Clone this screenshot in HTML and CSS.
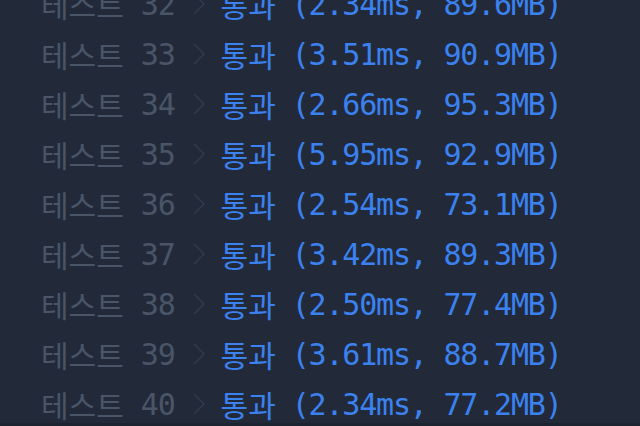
FILE: index.html
```html
<!DOCTYPE html>
<html lang="ko">
<head>
<meta charset="utf-8">
<link rel="stylesheet" href="styles.css">
</head>
<body>
<div class="list">
  <div class="row"><span class="name">테스트</span><span class="num">32</span><svg class="chev" viewBox="0 0 12 22"><path d="M1 1 L11 11 L1 21"/></svg><span class="ok">통과</span><span class="stat">(2.34ms, 89.6MB)</span></div>
  <div class="row"><span class="name">테스트</span><span class="num">33</span><svg class="chev" viewBox="0 0 12 22"><path d="M1 1 L11 11 L1 21"/></svg><span class="ok">통과</span><span class="stat">(3.51ms, 90.9MB)</span></div>
  <div class="row"><span class="name">테스트</span><span class="num">34</span><svg class="chev" viewBox="0 0 12 22"><path d="M1 1 L11 11 L1 21"/></svg><span class="ok">통과</span><span class="stat">(2.66ms, 95.3MB)</span></div>
  <div class="row"><span class="name">테스트</span><span class="num">35</span><svg class="chev" viewBox="0 0 12 22"><path d="M1 1 L11 11 L1 21"/></svg><span class="ok">통과</span><span class="stat">(5.95ms, 92.9MB)</span></div>
  <div class="row"><span class="name">테스트</span><span class="num">36</span><svg class="chev" viewBox="0 0 12 22"><path d="M1 1 L11 11 L1 21"/></svg><span class="ok">통과</span><span class="stat">(2.54ms, 73.1MB)</span></div>
  <div class="row"><span class="name">테스트</span><span class="num">37</span><svg class="chev" viewBox="0 0 12 22"><path d="M1 1 L11 11 L1 21"/></svg><span class="ok">통과</span><span class="stat">(3.42ms, 89.3MB)</span></div>
  <div class="row"><span class="name">테스트</span><span class="num">38</span><svg class="chev" viewBox="0 0 12 22"><path d="M1 1 L11 11 L1 21"/></svg><span class="ok">통과</span><span class="stat">(2.50ms, 77.4MB)</span></div>
  <div class="row"><span class="name">테스트</span><span class="num">39</span><svg class="chev" viewBox="0 0 12 22"><path d="M1 1 L11 11 L1 21"/></svg><span class="ok">통과</span><span class="stat">(3.61ms, 88.7MB)</span></div>
  <div class="row"><span class="name">테스트</span><span class="num">40</span><svg class="chev" viewBox="0 0 12 22"><path d="M1 1 L11 11 L1 21"/></svg><span class="ok">통과</span><span class="stat">(2.34ms, 77.2MB)</span></div>
</div>
</body>
</html>
```
FILE: styles.css
```css
html, body {
  margin: 0;
  padding: 0;
  background: #222a3a;
  height: 100%;
  overflow: hidden;
}
body {
  font-family: "DejaVu Sans Mono", "Noto Sans CJK KR", monospace;
  font-size: 30px;
  letter-spacing: -1.2px;
  border-bottom: 3px solid #1c2331;
  box-sizing: border-box;
}
.list {
  margin-top: -21px;
  padding-left: 41px;
}
.row {
  display: flex;
  align-items: center;
  height: 50px;
  white-space: pre;
}
.name, .ok {
  font-size: 30px;
  letter-spacing: 0;
}
.name, .num {
  color: #4a5568;
}
.num {
  margin-left: 17px;
}
.chev {
  width: 12px;
  height: 22px;
  margin-left: 18px;
  margin-right: 16px;
  fill: none;
  stroke: #323c4d;
  stroke-width: 1.3;
}
.ok, .stat {
  color: #3b82f0;
}
.stat {
  margin-left: 16px;
}
```
